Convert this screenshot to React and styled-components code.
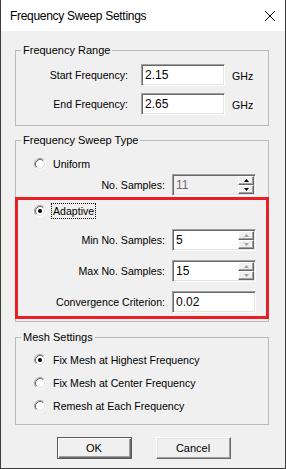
import React from "react";
import styled, { createGlobalStyle } from "styled-components";

const GlobalStyle = createGlobalStyle`
  html, body {
    margin: 0;
    padding: 0;
    background: #ffffff;
  }
  * {
    box-sizing: border-box;
  }
`;

const Window = styled.div`
  width: 286px;
  height: 469px;
  display: flex;
  flex-direction: column;
  border: 1px solid #3c3c3c;
  border-top: none;
  background: #f0f0f0;
  font-family: "Liberation Sans", Arial, sans-serif;
  font-size: 10.6px;
  color: #000;
`;

const TitleBar = styled.div`
  height: 31px;
  flex: none;
  display: flex;
  align-items: center;
  justify-content: space-between;
  padding: 0 9px 0 9px;
  background: #fff;
`;

const Title = styled.span`
  font-size: 12px;
  letter-spacing: -0.3px;
  color: #000;
`;

const Body = styled.div`
  flex: 1;
  display: flex;
  flex-direction: column;
  padding: 13px 16px 0 14px;
`;

const Group = styled.fieldset`
  margin: ${(p) => p.$top || 0}px 0 0 0;
  padding: ${(p) => p.$pad || "0"};
  border: 1px solid #bababa;
  min-width: 0;
`;

const Legend = styled.legend`
  margin-left: 5px;
  padding: 0 2px;
  line-height: 13px;
  font-size: 11px;
`;

const RangeGrid = styled.div`
  display: grid;
  grid-template-columns: 112px 84px auto;
  column-gap: 13px;
  row-gap: 7px;
  align-items: center;
`;

const Label = styled.span`
  text-align: right;
  white-space: nowrap;
`;

const Unit = styled.span`
  margin-left: -6px;
  padding-top: 2px;
`;

const Sunken = styled.div`
  height: 22px;
  width: 84px;
  display: flex;
  align-items: stretch;
  border-top: 1px solid #a0a0a0;
  border-left: 1px solid #a0a0a0;
  border-bottom: 1px solid #fff;
  border-right: 1px solid #fff;
  box-shadow: inset 1px 1px 0 #696969, inset -1px -1px 0 #e3e3e3;
  background: ${(p) => (p.$disabled ? "#f0f0f0" : "#fff")};
  padding: 2px 2px 1px 3px;
`;

const Value = styled.span`
  flex: 1;
  font-size: 12px;
  line-height: 17px;
  color: ${(p) => (p.$disabled ? "#6d6d6d" : "#000")};
`;

const SpinCol = styled.div`
  display: flex;
  flex-direction: column;
  width: 16px;
  margin-right: -1px;
  margin-top: -1px;
`;

const SpinBtn = styled.div`
  flex: 1;
  display: flex;
  align-items: center;
  justify-content: center;
  background: #f0f0f0;
  border-top: 1px solid #fff;
  border-left: 1px solid #fff;
  border-right: 1px solid #696969;
  border-bottom: 1px solid #696969;
  box-shadow: inset -1px -1px 0 #a0a0a0;
`;

const RadioRow = styled.div`
  height: 16px;
  display: flex;
  align-items: center;
  gap: 5px;
  padding-left: ${(p) => p.$indent || 18}px;
  margin-top: ${(p) => p.$top || 0}px;
`;

const RadioText = styled.span`
  padding: 1px;
  border: 1px dotted ${(p) => (p.$focus ? "#000" : "transparent")};
  line-height: 12px;
`;

const FieldRow = styled.div`
  display: flex;
  align-items: center;
  justify-content: flex-end;
  gap: 7px;
  padding-right: ${(p) => p.$right || 12}px;
  margin-top: ${(p) => p.$top || 0}px;
`;

const Highlight = styled.div`
  margin: 1px -1px 0 -1px;
  border: 3px solid #e81f25;
  padding: 3px 0 3px 0;
  display: flex;
  flex-direction: column;
`;

const Buttons = styled.div`
  display: flex;
  justify-content: center;
  gap: 24px;
  margin-top: 12px;
  padding-left: 3px;
`;

const Button = styled.button`
  width: 75px;
  height: 22px;
  font-family: inherit;
  font-size: 11px;
  color: #000;
  background: #f0f0f0;
  padding: 0;
  ${(p) =>
    p.$default
      ? `
    border: 1px solid #5a5a5a;
    box-shadow: inset 1px 1px 0 #fff, inset -1px -1px 0 #696969, inset -2px -2px 0 #a0a0a0;
  `
      : `
    border-top: 1px solid #fff;
    border-left: 1px solid #fff;
    border-right: 1px solid #696969;
    border-bottom: 1px solid #696969;
    box-shadow: inset -1px -1px 0 #a0a0a0, inset 1px 1px 0 #e3e3e3;
  `}
`;

const CloseIcon = () => (
  <svg width="12" height="12" viewBox="0 0 12 12">
    <path d="M1 1 L11 11 M11 1 L1 11" stroke="#000" strokeWidth="1" />
  </svg>
);

const RadioIcon = ({ checked }) => (
  <svg width="12" height="12" viewBox="0 0 12 12">
    <circle cx="6" cy="6" r="4.5" fill="#fff" />
    <path d="M9.89 2.11 A5.5 5.5 0 0 0 2.11 9.89" fill="none" stroke="#a0a0a0" />
    <path d="M2.11 9.89 A5.5 5.5 0 0 0 9.89 2.11" fill="none" stroke="#fff" />
    <path d="M9.18 2.82 A4.5 4.5 0 0 0 2.82 9.18" fill="none" stroke="#696969" />
    <path d="M2.82 9.18 A4.5 4.5 0 0 0 9.18 2.82" fill="none" stroke="#e3e3e3" />
    {checked && <circle cx="6" cy="6" r="2" fill="#000" />}
  </svg>
);

const Arrow = ({ down, color }) => (
  <svg width="5" height="3" viewBox="0 0 5 3">
    <polygon points={down ? "0,0 5,0 2.5,3" : "0,3 5,3 2.5,0"} fill={color} />
  </svg>
);

const Spin = ({ value, disabled, arrow }) => (
  <Sunken $disabled={disabled}>
    <Value $disabled={disabled}>{value}</Value>
    <SpinCol>
      <SpinBtn>
        <Arrow color={arrow} />
      </SpinBtn>
      <SpinBtn>
        <Arrow down color={arrow} />
      </SpinBtn>
    </SpinCol>
  </Sunken>
);

const TextBox = ({ value }) => (
  <Sunken>
    <Value>{value}</Value>
  </Sunken>
);

const Radio = ({ label, checked, focus, indent, top }) => (
  <RadioRow $indent={indent} $top={top}>
    <RadioIcon checked={checked} />
    <RadioText $focus={focus}>{label}</RadioText>
  </RadioRow>
);

const App = () => {
  return (
    <>
      <GlobalStyle />
      <Window>
        <TitleBar>
          <Title>Frequency Sweep Settings</Title>
          <CloseIcon />
        </TitleBar>
        <Body>
          <Group $pad="7px 0 10px 0">
            <Legend>Frequency Range</Legend>
            <RangeGrid>
              <Label>Start Frequency:</Label>
              <TextBox value="2.15" />
              <Unit>GHz</Unit>
              <Label>End Frequency:</Label>
              <TextBox value="2.65" />
              <Unit>GHz</Unit>
            </RangeGrid>
          </Group>

          <Group $top={8} $pad="9px 0 2px 0">
            <Legend>Frequency Sweep Type</Legend>
            <Radio label="Uniform" indent={18} />
            <FieldRow $top={2} $right={12}>
              <Label>No. Samples:</Label>
              <Spin value="11" disabled arrow="#000" />
            </FieldRow>
            <Highlight>
              <Radio label="Adaptive" checked focus indent={16} />
              <FieldRow $top={10} $right={10}>
                <Label>Min No. Samples:</Label>
                <Spin value="5" arrow="#a0a0a0" />
              </FieldRow>
              <FieldRow $top={9} $right={10}>
                <Label>Max No. Samples:</Label>
                <Spin value="15" arrow="#a0a0a0" />
              </FieldRow>
              <FieldRow $top={9} $right={10}>
                <Label>Convergence Criterion:</Label>
                <TextBox value="0.02" />
              </FieldRow>
            </Highlight>
          </Group>

          <Group $top={9} $pad="8px 0 10px 0">
            <Legend>Mesh Settings</Legend>
            <Radio label="Fix Mesh at Highest Frequency" checked />
            <Radio label="Fix Mesh at Center Frequency" top={7} />
            <Radio label="Remesh at Each Frequency" top={7} />
          </Group>

          <Buttons>
            <Button $default>OK</Button>
            <Button>Cancel</Button>
          </Buttons>
        </Body>
      </Window>
    </>
  );
};

export default App;
